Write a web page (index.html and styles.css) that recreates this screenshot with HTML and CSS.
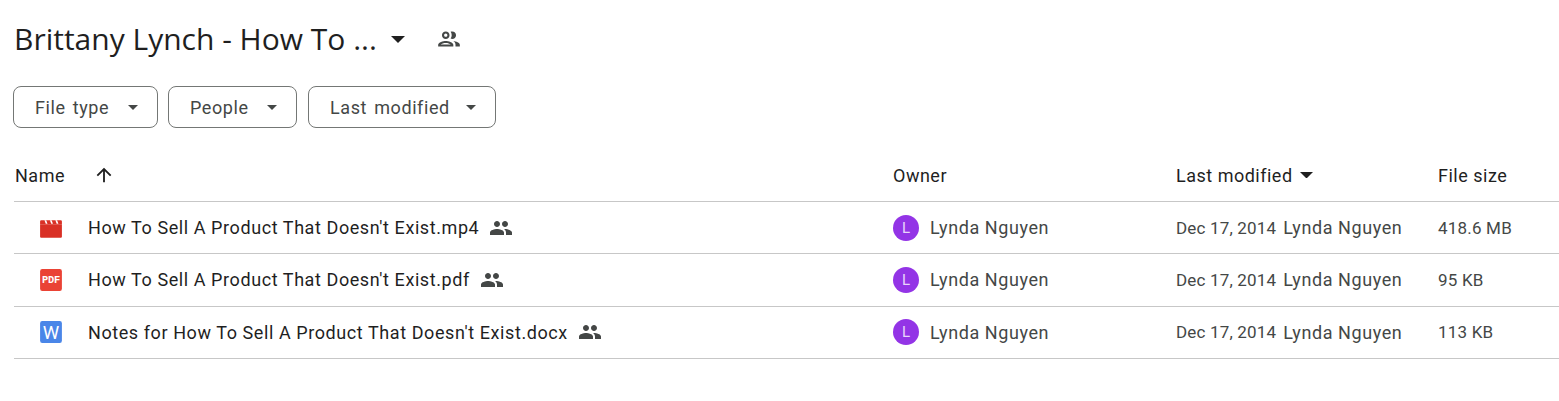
FILE: index.html
```html
<!DOCTYPE html>
<html lang="en">
<head>
<meta charset="utf-8">
<title>Brittany Lynch - How To ...</title>
<link rel="stylesheet" href="styles.css">
</head>
<body>
<header class="title-row">
  <h1 class="title">Brittany Lynch - How To ...</h1>
  <svg class="title-caret" viewBox="0 0 16 8"><path d="M0 0h16L8 8z"/></svg>
  <svg class="title-people" viewBox="0 0 24 24"><path d="M9 13.75c-2.34 0-7 1.17-7 3.5V19h14v-1.75c0-2.33-4.66-3.5-7-3.5zM4.34 17c.84-.58 2.87-1.25 4.66-1.25s3.82.67 4.66 1.25H4.34zM9 12c1.93 0 3.5-1.57 3.5-3.5S10.93 5 9 5 5.5 6.57 5.5 8.5 7.07 12 9 12zm0-5c.83 0 1.5.67 1.5 1.5S9.83 10 9 10s-1.5-.67-1.5-1.5S8.17 7 9 7zm7.04 6.81c1.16.84 1.96 1.96 1.96 3.44V19h4v-1.75c0-2.02-3.5-3.17-5.96-3.44zM15 12c1.93 0 3.5-1.57 3.5-3.5S16.93 5 15 5c-.54 0-1.04.13-1.5.35.63.89 1 1.98 1 3.15s-.37 2.26-1 3.15c.46.22.96.35 1.5.35z"/></svg>
</header>
<div class="filters">
  <button class="chip chip-type">File type<svg class="chip-caret" viewBox="0 0 10 5"><path d="M0 0h10L5 5z"/></svg></button>
  <button class="chip chip-people">People<svg class="chip-caret" viewBox="0 0 10 5"><path d="M0 0h10L5 5z"/></svg></button>
  <button class="chip chip-modified">Last modified<svg class="chip-caret" viewBox="0 0 10 5"><path d="M0 0h10L5 5z"/></svg></button>
</div>
<main class="table">
  <div class="row head">
    <div class="cell name-head">Name<svg class="arrow" viewBox="0 0 24 24"><path d="M4 12l1.41 1.41L11 7.83V20h2V7.83l5.58 5.59L20 12l-8-8-8 8z"/></svg></div>
    <div class="cell">Owner</div>
    <div class="cell">Last modified<svg class="sort-caret" viewBox="0 0 12 6"><path d="M0 0h12L6 6z"/></svg></div>
    <div class="cell">File size</div>
  </div>
  <div class="row item">
    <div class="cell name">
      <svg class="file-icon" viewBox="0 0 22 22"><path fill="#d93025" d="M1 8h20v11a1 1 0 0 1-1 1H2a1 1 0 0 1-1-1z"/><path fill="#d93025" d="M2 4h18a1 1 0 0 1 1 1v3H1V5a1 1 0 0 1 1-1z"/><path fill="#fff" d="M5 4h1.6l1.2 3H6.2zM10 4h1.6l1.2 3h-1.6zM15 4h1.6l1.2 3h-1.6z"/></svg>
      <span class="file-name">How To Sell A Product That Doesn't Exist.mp4</span>
      <svg class="shared" viewBox="0 0 24 24"><path d="M16 11c1.66 0 2.99-1.34 2.99-3S17.66 5 16 5c-1.66 0-3 1.34-3 3s1.34 3 3 3zm-8 0c1.66 0 2.99-1.34 2.99-3S9.66 5 8 5C6.34 5 5 6.34 5 8s1.34 3 3 3zm0 2c-2.33 0-7 1.17-7 3.5V19h14v-2.5c0-2.33-4.67-3.5-7-3.5zm8 0c-.29 0-.62.02-.97.05 1.16.84 1.97 1.97 1.97 3.45V19h6v-2.5c0-2.33-4.67-3.5-7-3.5z"/></svg>
    </div>
    <div class="cell owner"><span class="avatar">L</span>Lynda Nguyen</div>
    <div class="cell modified"><span class="date">Dec 17, 2014</span>Lynda Nguyen</div>
    <div class="cell size">418.6 MB</div>
  </div>
  <div class="row item">
    <div class="cell name">
      <svg class="file-icon" viewBox="0 0 22 22"><rect x="1" y="1" width="20" height="20" rx="2" fill="#ea4335"/><text class="icon-pdf" x="11" y="14">PDF</text></svg>
      <span class="file-name">How To Sell A Product That Doesn't Exist.pdf</span>
      <svg class="shared" viewBox="0 0 24 24"><path d="M16 11c1.66 0 2.99-1.34 2.99-3S17.66 5 16 5c-1.66 0-3 1.34-3 3s1.34 3 3 3zm-8 0c1.66 0 2.99-1.34 2.99-3S9.66 5 8 5C6.34 5 5 6.34 5 8s1.34 3 3 3zm0 2c-2.33 0-7 1.17-7 3.5V19h14v-2.5c0-2.33-4.67-3.5-7-3.5zm8 0c-.29 0-.62.02-.97.05 1.16.84 1.97 1.97 1.97 3.45V19h6v-2.5c0-2.33-4.67-3.5-7-3.5z"/></svg>
    </div>
    <div class="cell owner"><span class="avatar">L</span>Lynda Nguyen</div>
    <div class="cell modified"><span class="date">Dec 17, 2014</span>Lynda Nguyen</div>
    <div class="cell size">95 KB</div>
  </div>
  <div class="row item">
    <div class="cell name">
      <svg class="file-icon" viewBox="0 0 22 22"><rect x="1" y="1" width="20" height="20" rx="2" fill="#4a86e8"/><text class="icon-w" x="11" y="17">W</text></svg>
      <span class="file-name">Notes for How To Sell A Product That Doesn't Exist.docx</span>
      <svg class="shared" viewBox="0 0 24 24"><path d="M16 11c1.66 0 2.99-1.34 2.99-3S17.66 5 16 5c-1.66 0-3 1.34-3 3s1.34 3 3 3zm-8 0c1.66 0 2.99-1.34 2.99-3S9.66 5 8 5C6.34 5 5 6.34 5 8s1.34 3 3 3zm0 2c-2.33 0-7 1.17-7 3.5V19h14v-2.5c0-2.33-4.67-3.5-7-3.5zm8 0c-.29 0-.62.02-.97.05 1.16.84 1.97 1.97 1.97 3.45V19h6v-2.5c0-2.33-4.67-3.5-7-3.5z"/></svg>
    </div>
    <div class="cell owner"><span class="avatar">L</span>Lynda Nguyen</div>
    <div class="cell modified"><span class="date">Dec 17, 2014</span>Lynda Nguyen</div>
    <div class="cell size">113 KB</div>
  </div>
</main>
</body>
</html>
```
FILE: styles.css
```css
* { box-sizing: border-box; }
html, body { margin: 0; background: #fff; }
body {
  padding: 14px 0 0 14px;
  width: 1559px;
  height: 401px;
  overflow: hidden;
  font-family: Roboto, "Liberation Sans", sans-serif;
  color: #1f1f1f;
}
.title-row { display: flex; align-items: center; height: 50px; }
.title { margin: 0; font-family: "Open Sans", Roboto, sans-serif; font-weight: 400; font-size: 30px; line-height: 50px; width: 376px; white-space: nowrap; }
.title-caret { width: 14px; height: 7px; fill: #1f1f1f; margin-left: 1px; }
.title-people { width: 26px; height: 26px; margin-left: 31px; fill: #444746; }
.filters { display: flex; gap: 10px; margin-top: 22px; margin-left: -1px; }
.chip {
  display: flex; align-items: center; height: 42px; padding: 0 0 0 21px;
  background: #fff; border: 1px solid #747775; border-radius: 8px;
  font: 400 18px Roboto, sans-serif; color: #444746;
  letter-spacing: .6px; word-spacing: 2px;
}
.chip-type { width: 145px; }
.chip-people { width: 129px; }
.chip-modified { width: 188px; margin-left: 1px; }
.chip-caret { width: 10px; height: 5px; fill: #444746; margin-left: auto; margin-right: 19px; }
.table { margin-top: 21px; }
.row { display: grid; grid-template-columns: 879px 283px 262px 1fr; align-items: center; border-bottom: 1px solid #c7c7c7; }
.head { height: 53px; font-size: 18px; letter-spacing: .5px; color: #1f1f1f; }
.item { height: 52.33px; font-size: 18px; }
.cell { display: flex; align-items: center; white-space: nowrap; }
.name-head { padding-left: 1px; }
.arrow { width: 22px; height: 22px; fill: #1f1f1f; margin-left: 28px; }
.sort-caret { width: 13px; height: 6.5px; fill: #1f1f1f; margin-left: 7px; }
.name { padding-left: 25px; }
.file-icon { width: 24px; height: 24px; flex: none; }
.file-name { margin-left: 25px; color: #1f1f1f; letter-spacing: .58px; }
.shared { width: 24px; height: 24px; fill: #444746; margin-left: 10px; }
.owner, .modified, .size { color: #444746; letter-spacing: .58px; }
.avatar { width: 26px; height: 26px; border-radius: 50%; background: #9334e6; color: #e8d5fa; font-size: 15px; letter-spacing: 0; display: flex; align-items: center; justify-content: center; margin-right: 11px; }
.date { margin-right: 7px; font-size: 17px; letter-spacing: .17px; }
.size { font-size: 17px; letter-spacing: .2px; }
.icon-pdf { font: 700 9.5px "Liberation Mono", monospace; letter-spacing: -.2px; fill: #fff; text-anchor: middle; }
.icon-w { font: 400 17px Roboto, sans-serif; fill: #fff; text-anchor: middle; }
```
